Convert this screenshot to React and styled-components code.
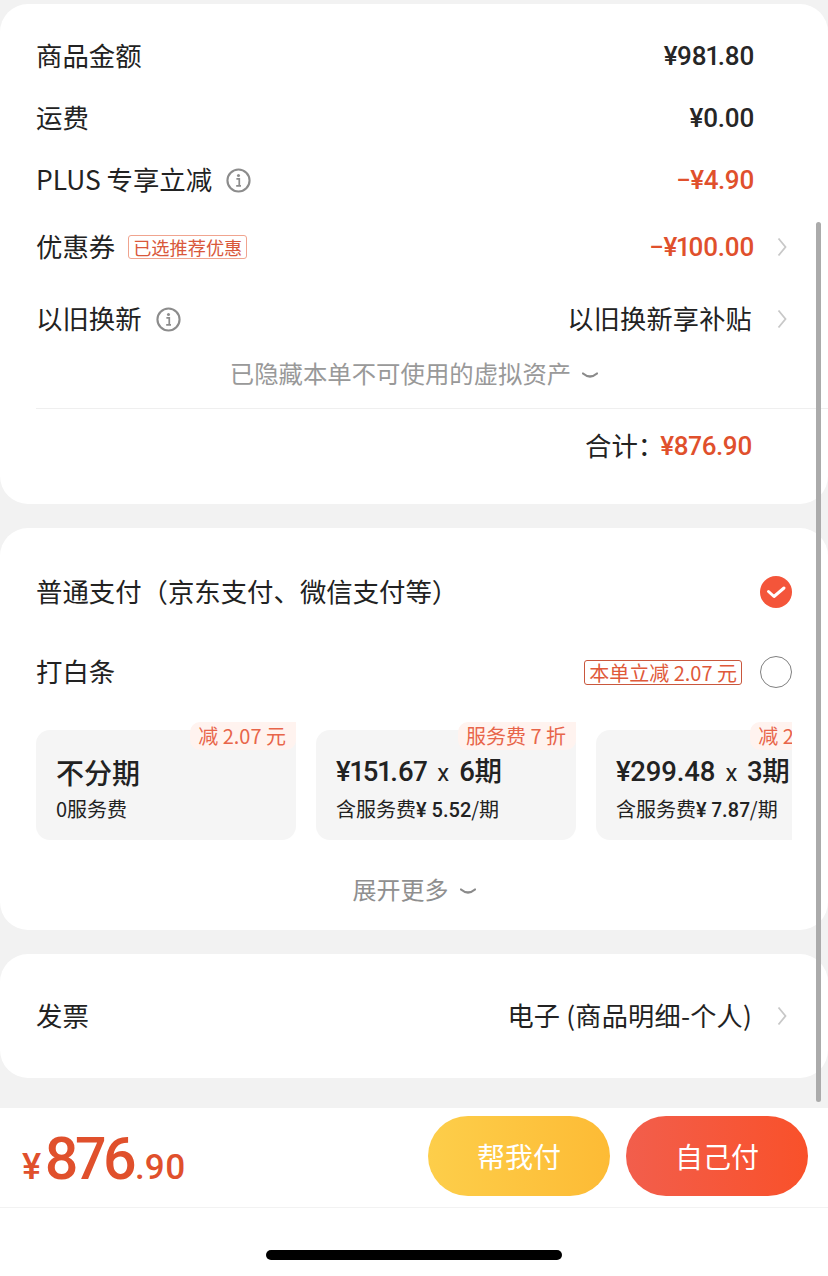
import React from 'react';
import styled, { createGlobalStyle } from 'styled-components';

const cjk = '"Noto Sans CJK SC", "Noto Sans", sans-serif';
const num = 'Roboto, "Noto Sans CJK SC", sans-serif';
const orange = '#e0502c';

const Chevron = () => (
	<ChevronSvg viewBox="0 0 10 20" fill="none">
		<path d="M1.5 1.5 L8.5 10 L1.5 18.5" stroke="#c8c8c8" strokeWidth="1.8" />
	</ChevronSvg>
);

const Down = () => (
	<DownSvg viewBox="0 0 16 8" fill="none">
		<path d="M1 1.5 Q8 7.5 15 1.5" stroke="#8a8a8a" strokeWidth="2.2" strokeLinecap="round" />
	</DownSvg>
);

const Info = () => (
	<InfoSvg viewBox="0 0 26 26" fill="none">
		<circle cx="13" cy="13" r="11.5" stroke="#8c8c8c" strokeWidth="2.2" />
		<circle cx="13" cy="7.8" r="1.6" fill="#8c8c8c" />
		<path d="M10.8 11.2 H13.8 V18 M10.6 18.6 H15.6" stroke="#8c8c8c" strokeWidth="1.8" />
	</InfoSvg>
);

const plans = [
	{ title: '不分期', sub: '0服务费', badge: '减 2.07 元', big: true },
	{ price: '¥151.67', times: '6期', sub: '含服务费', fee: '¥ 5.52', badge: '服务费 7 折' },
	{ price: '¥299.48', times: '3期', sub: '含服务费', fee: '¥ 7.87', badge: '减 2.07 元' },
];

const App = () => {
	return (
		<Page>
			<GlobalStyle />
			<Card $height={500} $pad={21}>
				<Row $h={62}>
					<Label>商品金额</Label>
					<Amount>¥981.80</Amount>
					<Slot />
				</Row>
				<Row $h={62}>
					<Label>运费</Label>
					<Amount>¥0.00</Amount>
					<Slot />
				</Row>
				<Row $h={62}>
					<Label>PLUS 专享立减</Label>
					<Info />
					<Amount $red>−¥4.90</Amount>
					<Slot />
				</Row>
				<Row $h={72}>
					<Label>优惠券</Label>
					<CouponTag>已选推荐优惠</CouponTag>
					<Amount $red>−¥100.00</Amount>
					<Slot><Chevron /></Slot>
				</Row>
				<Row $h={72}>
					<Label>以旧换新</Label>
					<Info />
					<Value>以旧换新享补贴</Value>
					<Slot><Chevron /></Slot>
				</Row>
				<Hidden>已隐藏本单不可使用的虚拟资产<Down /></Hidden>
				<Divider />
				<TotalRow>
					<TotalLabel>合计：</TotalLabel>
					<TotalAmount>¥876.90</TotalAmount>
				</TotalRow>
			</Card>

			<Card $height={402} $pad={24}>
				<PayRow>
					<Label>普通支付（京东支付、微信支付等）</Label>
					<CheckIcon viewBox="0 0 32 32">
						<circle cx="16" cy="16" r="16" fill="#f4553a" />
						<path d="M8.5 15.5 L14 20.5 L24 12" fill="none" stroke="#fff" strokeWidth="3" strokeLinecap="round" strokeLinejoin="round" />
					</CheckIcon>
				</PayRow>
				<PayRow>
					<Label>打白条</Label>
					<PayAside>
						<SaveTag>本单立减 2.07 元</SaveTag>
						<Radio />
					</PayAside>
				</PayRow>
				<PlanStrip>
					{plans.map((p) => (
						<PlanCard key={p.badge + p.sub + (p.price || '')}>
							<PlanBadge>{p.badge}</PlanBadge>
							{p.big ? (
								<PlanName>{p.title}</PlanName>
							) : (
								<PlanTitle>
									{p.price}<Times>x</Times>{p.times}
								</PlanTitle>
							)}
							<PlanSub>
								{p.sub}
								{p.fee && <Fee>{p.fee}</Fee>}
								{p.fee && '/期'}
							</PlanSub>
						</PlanCard>
					))}
				</PlanStrip>
				<More>展开更多<Down /></More>
			</Card>

			<Card $height={124} $pad={0}>
				<Row $h={124}>
					<Label>发票</Label>
					<Value>电子 (商品明细-个人)</Value>
					<Slot><Chevron /></Slot>
				</Row>
			</Card>

			<Footer>
				<BuyBar>
					<Price>
						<Yen>¥</Yen>
						<Whole>876</Whole>
						<Cents>.90</Cents>
					</Price>
					<Buttons>
						<PayButton $from="#fdce4a" $to="#fdbb35">帮我付</PayButton>
						<PayButton $from="#f25e4c" $to="#f9512a">自己付</PayButton>
					</Buttons>
				</BuyBar>
				<HomeArea>
					<HomeBar />
				</HomeArea>
			</Footer>
			<ScrollThumb />
		</Page>
	);
};

export default App;

const GlobalStyle = createGlobalStyle`
	html, body {
		margin: 0;
		padding: 0;
		background: #f2f2f2;
	}
	* {
		box-sizing: border-box;
	}
`;

const Page = styled.div`
	position: relative;
	width: 828px;
	height: 1276px;
	padding-top: 4px;
	overflow: hidden;
	background: #f2f2f2;
	font-family: ${cjk};
	font-variant-numeric: proportional-nums;
	color: #222;
`;

const Card = styled.section`
	height: ${(p) => p.$height}px;
	margin-bottom: 24px;
	padding: ${(p) => p.$pad}px 0 0 36px;
	background: #fff;
	border-radius: 28px;
`;

const Row = styled.div`
	display: flex;
	align-items: center;
	gap: 14px;
	height: ${(p) => p.$h}px;
	padding-right: 36px;
`;

const Label = styled.span`
	margin-bottom: 2px;
	font-size: 26.4px;
	line-height: 36px;
	white-space: nowrap;
`;

const Amount = styled.span`
	margin-left: auto;
	font-family: ${num};
	font-size: 26px;
	font-weight: 500;
	letter-spacing: -0.5px;
	color: ${(p) => (p.$red ? orange : '#262626')};
`;

const Value = styled.span`
	margin: 0 2px 2px auto;
	font-size: 26.2px;
	letter-spacing: 0.2px;
	white-space: nowrap;
`;

const Slot = styled.span`
	display: flex;
	justify-content: flex-end;
	margin-left: -14px;
	flex: 0 0 38px;
	padding-right: 5px;
`;

const ChevronSvg = styled.svg`
	width: 10px;
	height: 20px;
`;

const DownSvg = styled.svg`
	width: 16px;
	height: 8px;
	margin-left: 11px;
	vertical-align: 3px;
`;

const InfoSvg = styled.svg`
	width: 25px;
	height: 25px;
`;

const CouponTag = styled.span`
	margin-left: -1px;
	padding: 0 4px;
	font-size: 18.2px;
	line-height: 22px;
	color: #d9583b;
	border: 1px solid #f0a48f;
	border-radius: 3px;
`;

const Hidden = styled.div`
	height: 36px;
	margin-left: -36px;
	text-align: center;
	font-size: 24.4px;
	line-height: 36px;
	color: #999;
`;

const Divider = styled.div`
	height: 1px;
	margin-top: 17px;
	background: #efefef;
`;

const TotalRow = styled.div`
	display: flex;
	align-items: center;
	justify-content: flex-end;
	height: 74px;
	padding-right: 76px;
`;

const TotalLabel = styled(Label)`
	margin-right: -4px;
`;

const TotalAmount = styled.span`
	font-family: ${num};
	font-size: 26px;
	font-weight: 500;
	letter-spacing: -0.5px;
	color: ${orange};
`;

const PayRow = styled.div`
	display: flex;
	align-items: center;
	justify-content: space-between;
	height: 80px;
	padding-right: 36px;
`;

const PayAside = styled.div`
	display: flex;
	align-items: center;
	gap: 18px;
`;

const CheckIcon = styled.svg`
	width: 32px;
	height: 32px;
`;

const Radio = styled.span`
	width: 32px;
	height: 32px;
	border: 1px solid #808080;
	border-radius: 50%;
`;

const SaveTag = styled.span`
	padding: 0 4px;
	font-size: 20px;
	line-height: 23px;
	color: #e0593a;
	border: 1px solid #c9573d;
	border-radius: 3px;
`;

const PlanStrip = styled.div`
	display: flex;
	gap: 20px;
	width: 756px;
	height: 118px;
	margin-top: 10px;
	padding-top: 8px;
	overflow: hidden;
`;

const PlanCard = styled.div`
	position: relative;
	flex: 0 0 260px;
	height: 110px;
	padding: 22px 0 0 20px;
	background: #f5f5f5;
	border-radius: 14px;
`;

const PlanBadge = styled.span`
	position: absolute;
	top: -8px;
	right: 0;
	height: 28px;
	padding: 0 10px 0 8px;
	font-size: 20px;
	line-height: 28px;
	white-space: nowrap;
	color: #e8654a;
	background: #fff3ef;
	border-radius: 10px 0 10px 10px;
`;

const PlanTitle = styled.div`
	height: 40px;
	margin-bottom: 2px;
	font-family: ${num};
	font-size: 27.5px;
	font-weight: 500;
	line-height: 40px;
	letter-spacing: -0.3px;
	white-space: nowrap;
`;

const PlanName = styled(PlanTitle)`
	font-family: ${cjk};
	font-size: 28px;
	letter-spacing: 0;
`;

const Times = styled.span`
	margin: 0 10px;
	font-size: 24px;
	font-weight: 400;
`;

const PlanSub = styled.div`
	font-size: 20px;
	line-height: 30px;
	white-space: nowrap;
`;

const Fee = styled.span`
	font-family: ${num};
	font-weight: 500;
`;

const More = styled.div`
	height: 36px;
	margin: 31px 0 0 -36px;
	text-align: center;
	font-size: 24px;
	line-height: 36px;
	color: #8f8f8f;
`;

const Footer = styled.footer`
	margin-top: 30px;
	background: #fff;
`;

const BuyBar = styled.div`
	display: flex;
	align-items: flex-start;
	justify-content: space-between;
	height: 100px;
	padding: 8px 20px 0 22px;
	border-bottom: 1px solid #f2f2f2;
`;

const Price = styled.div`
	display: flex;
	align-items: baseline;
	margin-top: 8px;
	font-family: ${num};
	font-weight: 500;
	color: ${orange};
`;

const Yen = styled.span`
	font-size: 36px;
`;

const Whole = styled.span`
	margin-left: 3px;
	font-size: 59px;
	letter-spacing: -3.6px;
`;

const Cents = styled.span`
	margin-left: 2px;
	font-size: 35px;
`;

const Buttons = styled.div`
	display: flex;
	gap: 16px;
`;

const PayButton = styled.div`
	width: 182px;
	height: 80px;
	text-align: center;
	font-size: 28px;
	line-height: 80px;
	color: #fff;
	background: linear-gradient(90deg, ${(p) => p.$from}, ${(p) => p.$to});
	border-radius: 40px;
`;

const HomeArea = styled.div`
	display: flex;
	justify-content: center;
	height: 68px;
	padding-top: 42px;
`;

const HomeBar = styled.div`
	width: 296px;
	height: 10px;
	background: #000;
	border-radius: 5px;
`;

const ScrollThumb = styled.div`
	position: absolute;
	top: 222px;
	left: 816px;
	width: 5px;
	height: 880px;
	background: #ababab;
	border-radius: 3px;
`;
